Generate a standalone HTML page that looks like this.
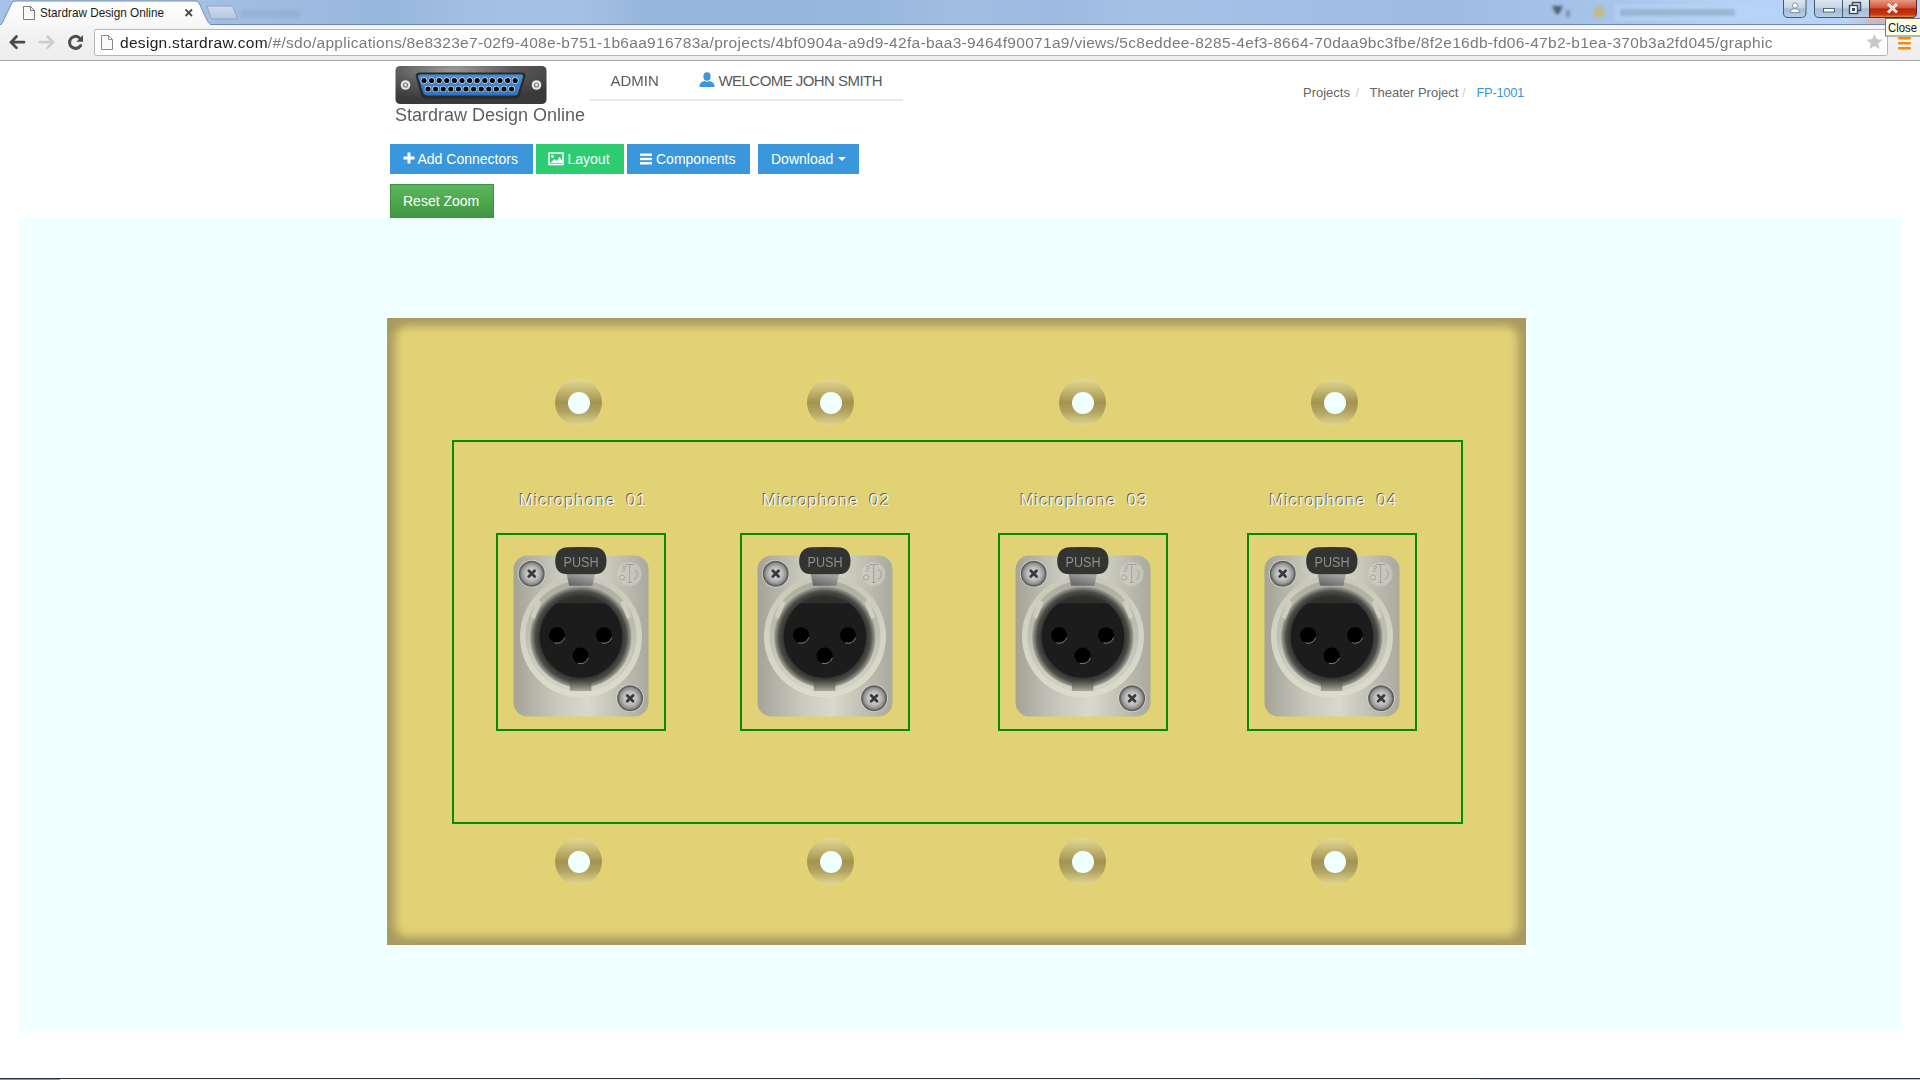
<!DOCTYPE html>
<html><head><meta charset="utf-8">
<style>
*{margin:0;padding:0;box-sizing:border-box}
html,body{width:1920px;height:1080px;overflow:hidden;background:#fff;font-family:"Liberation Sans",sans-serif;position:relative}
.abs{position:absolute}
#tabbar{left:0;top:0;width:1920px;height:25px;background:linear-gradient(90deg,#a6c2e4 0%,#9ab8de 20%,#96b4da 40%,#a2c0e4 60%,#9dbbe0 80%,#b0cdf0 100%)}
#tab{left:6px;top:1px;width:200px;height:24px;background:linear-gradient(#fff,#f6f6f6);border:1px solid #8aa0b8;border-bottom:none;border-radius:5px 5px 0 0;transform:perspective(0)}
#toolbar{left:0;top:25px;width:1920px;height:36px;background:linear-gradient(#fdfdfd,#f2f2f2);border-top:1px solid #7d93ac;border-bottom:1px solid #a8a8a8}
#omni{left:94px;top:29px;width:1760px;height:27px}
#omni .url{position:absolute;left:26px;top:5px;font-size:15.5px;color:#7a7a7a;white-space:nowrap;letter-spacing:0.3px}
#omni .url b{font-weight:normal;color:#222}
#page{left:0;top:61px;width:1920px;height:1019px;background:#fff}
.btn{position:absolute;height:30px;color:#fff;font-size:14px;line-height:30px;white-space:nowrap}
.blue{background:#3a97dc}
.btn .t{position:absolute;top:0}
.btn .ic{position:absolute;line-height:0}
.reset{background:linear-gradient(#5cb85c,#419641);border:1px solid #3e8f3e}
.nav{font-size:15px;color:#5a5a5a;white-space:nowrap}
.bc{font-size:13px;color:#666;white-space:nowrap}
.bc.sep{color:#ccc}
#logo{background:linear-gradient(90deg,#3d3d3d,#6a6a6a 30%,#8a8a8a 45%,#5a5a5a 70%,#3d3d3d);border-radius:5px}
.green{background:#2ecc71}
#canvas{left:19px;top:218px;width:1882px;height:814px;background:#f0ffff}
#plate{left:387px;top:318px;width:1139px;height:627px;background:#a99a5e;overflow:hidden}
#plate::after{content:"";position:absolute;left:8px;top:8px;right:8px;bottom:8px;border-radius:12px;background:#e2d276;filter:blur(5px)}
.hole{position:absolute;width:47px;height:47px;border-radius:50%;background:linear-gradient(#e4da94 0%,#bdb06a 30%,#a29450 50%,#b2a460 70%,#e2d890 100%)}
.hole::after{content:"";position:absolute;left:12.5px;top:12.5px;width:22px;height:22px;border-radius:50%;background:#f0ffff}
.gbox{position:absolute;border:2px solid #078a07}
.mic{position:absolute;font-size:17px;color:#f4f4ec;text-shadow:-1px -1px 0 #5e5e56;white-space:nowrap}
</style></head><body>
<div id="page" class="abs"></div><svg class="abs" style="left:0;top:0" width="1920" height="61" viewBox="0 0 1920 61">
<defs>
<linearGradient id="tabbarg" x1="0" y1="0" x2="1920" y2="0" gradientUnits="userSpaceOnUse">
<stop offset="0" stop-color="#a6c2e6"/><stop offset="0.1" stop-color="#a4c0e4"/><stop offset="0.2" stop-color="#98b7dc"/><stop offset="0.25" stop-color="#a2c0e4"/><stop offset="0.3" stop-color="#a4c2e6"/><stop offset="0.34" stop-color="#96b5da"/><stop offset="0.45" stop-color="#98b7dc"/><stop offset="0.5" stop-color="#a0bee2"/><stop offset="0.55" stop-color="#9dbbe0"/><stop offset="0.6" stop-color="#a4c2e6"/><stop offset="0.75" stop-color="#9ebce2"/><stop offset="0.85" stop-color="#a8c6ea"/><stop offset="0.9" stop-color="#b4d2f4"/><stop offset="1" stop-color="#b8d6f8"/>
</linearGradient>
<filter id="blur2" x="-20%" y="-50%" width="140%" height="200%"><feGaussianBlur stdDeviation="1.6"/></filter>
<linearGradient id="tabg" x1="0" y1="0" x2="0" y2="1"><stop offset="0" stop-color="#ffffff"/><stop offset="1" stop-color="#f7f7f7"/></linearGradient>
<linearGradient id="tbg" x1="0" y1="0" x2="0" y2="1"><stop offset="0" stop-color="#fbfbfb"/><stop offset="1" stop-color="#ececec"/></linearGradient>
<linearGradient id="closeg" x1="0" y1="0" x2="0" y2="1"><stop offset="0" stop-color="#e8a08c"/><stop offset="0.45" stop-color="#d45a3e"/><stop offset="0.55" stop-color="#b82410"/><stop offset="0.85" stop-color="#c83a10"/><stop offset="1" stop-color="#f0a040"/></linearGradient>
<linearGradient id="wbtng" x1="0" y1="0" x2="0" y2="1"><stop offset="0" stop-color="#dfe8f2"/><stop offset="0.45" stop-color="#c8d6e6"/><stop offset="0.55" stop-color="#a8bcd4"/><stop offset="1" stop-color="#b8cce4"/></linearGradient>
<linearGradient id="newtabg" x1="0" y1="0" x2="0" y2="1"><stop offset="0" stop-color="#d4e0ee"/><stop offset="1" stop-color="#b8c8dc"/></linearGradient>
<radialGradient id="glowr" cx="0.5" cy="0.5" r="0.5"><stop offset="0" stop-color="#ff8060" stop-opacity="0.7"/><stop offset="1" stop-color="#ff8060" stop-opacity="0"/></radialGradient>
</defs>
<rect x="0" y="0" width="1920" height="61" fill="url(#tbg)"/>
<rect x="0" y="0" width="1920" height="25" fill="url(#tabbarg)"/>
<clipPath id="tbclip"><rect x="0" y="0" width="1920" height="24"/></clipPath><ellipse cx="1880" cy="19" rx="34" ry="10" fill="url(#glowr)" clip-path="url(#tbclip)"/>
<line x1="0" y1="24.5" x2="1920" y2="24.5" stroke="#6a86aa" stroke-width="1"/>
<path d="M0 26 L0.5 25 L3 22 Q4 19 5.5 16 L12 3 Q13.5 1 16 1 L195 1 Q197.5 1 199 3 L205 16 Q206.5 19 208 22 L211 25 L212 26 Z" fill="url(#tabg)"/>
<path d="M0.5 25 L3 22 Q4 19 5.5 16 L12 3 Q13.5 1 16 1 L195 1 Q197.5 1 199 3 L205 16 Q206.5 19 208 22 L211 25" fill="none" stroke="#7890ac" stroke-width="1"/>
<path d="M207 6 L230 6 Q232.5 6 233.5 8 L237 17 Q238 19 235.5 19 L214 19 Q211.5 19 210.5 17 Z" fill="url(#newtabg)" stroke="#8ea4c0" stroke-width="1" opacity="0.9"/>
<path d="M23.5 6.5 L30.5 6.5 L34.5 10.5 L34.5 19.5 L23.5 19.5 Z" fill="#fafafa" stroke="#7a7a7a" stroke-width="1"/>
<path d="M30.5 6.5 L30.5 10.5 L34.5 10.5" fill="none" stroke="#7a7a7a" stroke-width="1"/>
<text x="40" y="17" font-family="Liberation Sans" font-size="13" textLength="124" lengthAdjust="spacingAndGlyphs" fill="#1a1a1a">Stardraw Design Online</text>
<path d="M185.5 9.5 L192 16 M192 9.5 L185.5 16" stroke="#4a4a4a" stroke-width="1.8"/>
<!-- nav buttons -->
<path d="M16.5 36.5 L11 42.2 L16.5 47.9 M11.5 42.2 L24 42.2" stroke="#4a4a4a" stroke-width="2.7" stroke-linecap="round" stroke-linejoin="miter" fill="none"/>
<path d="M47.5 36.5 L53 42.2 L47.5 47.9 M52.5 42.2 L40 42.2" stroke="#cdcdcd" stroke-width="2.7" stroke-linecap="round" stroke-linejoin="miter" fill="none"/>
<path d="M80.6 45.6 A6 6 0 1 1 79.2 37.6" stroke="#4e4e4e" stroke-width="3" fill="none" stroke-linecap="round"/>
<path d="M83 35 L83 41.8 L76.3 41.8 Z" fill="#4e4e4e"/>
<!-- omnibox -->
<rect x="94.5" y="29.5" width="1793" height="26" rx="2" fill="#fff" stroke="#b5b5b5" stroke-width="1"/>
<path d="M101.5 35.5 L108.5 35.5 L112.5 39.5 L112.5 49.5 L101.5 49.5 Z" fill="#fafafa" stroke="#8a8a8a" stroke-width="1"/>
<path d="M108.5 35.5 L108.5 39.5 L112.5 39.5" fill="none" stroke="#8a8a8a" stroke-width="1"/>
<path d="M1874.5 34 L1876.8 39.3 L1882.5 39.7 L1878.2 43.4 L1879.6 49 L1874.5 46 L1869.4 49 L1870.8 43.4 L1866.5 39.7 L1872.2 39.3 Z" fill="#c8c8c8"/>
<rect x="1898" y="37" width="13" height="2.4" rx="1" fill="#f08c10"/>
<rect x="1898" y="42" width="13" height="2.4" rx="1" fill="#f08c10"/>
<rect x="1898" y="47" width="13" height="2.4" rx="1" fill="#f08c10"/>
<line x1="0" y1="60.5" x2="1920" y2="60.5" stroke="#a6a6a6" stroke-width="1"/>
<!-- blurry taskbar items -->
<g filter="url(#blur2)"><circle cx="1599" cy="12" r="6" fill="#c0bc80" opacity="0.9"/>
<path d="M1552 6 L1563 6 L1559 14 L1556 14 Z" fill="#3a4454" opacity="0.8"/>
<rect x="1566" y="10" width="4" height="7" fill="#506078" opacity="0.5"/>
<rect x="1615" y="4" width="320" height="17" fill="#b8d6f8" opacity="0.6"/>
<rect x="1620" y="9" width="115" height="7" fill="#90a8c8" opacity="0.7"/>
<rect x="240" y="10" width="60" height="8" fill="#90a8c8" opacity="0.5"/></g>
<!-- window buttons -->
<path d="M1783.5 -1 L1783.5 13 Q1783.5 17.5 1788 17.5 L1801.5 17.5 Q1806 17.5 1806 13 L1806 -1" fill="url(#wbtng)" stroke="#4a5a6e" stroke-width="1"/>
<circle cx="1795" cy="5.5" r="2.6" fill="#fff" stroke="#4a5a6e" stroke-width="0.6"/>
<path d="M1790.5 12.5 Q1790.5 8.8 1795 8.8 Q1799.5 8.8 1799.5 12.5 Z" fill="#fff" stroke="#4a5a6e" stroke-width="0.6"/>
<path d="M1814.5 -1 L1814.5 13 Q1814.5 17.5 1819 17.5 L1869.5 17.5 L1869.5 -1" fill="url(#wbtng)" stroke="#4a5a6e" stroke-width="1"/>
<line x1="1842.5" y1="0" x2="1842.5" y2="17" stroke="#4a5a6e" stroke-width="1"/>
<rect x="1823.5" y="8.5" width="11" height="3.5" fill="#fff" stroke="#3a4a5a" stroke-width="0.8"/>
<rect x="1852.5" y="2.5" width="8" height="8" fill="none" stroke="#3a4a5a" stroke-width="1.4"/>
<rect x="1849.5" y="5.5" width="8" height="8" fill="#fff" stroke="#3a4a5a" stroke-width="1.4"/>
<rect x="1852" y="8" width="3" height="3" fill="#3a4a5a"/>
<path d="M1869.5 -1 L1869.5 17.5 L1912 17.5 Q1916.5 17.5 1916.5 13 L1916.5 -1" fill="url(#closeg)" stroke="#5a2a20" stroke-width="1"/>
<path d="M1888 4 L1897 12.5 M1897 4 L1888 12.5" stroke="#fff" stroke-width="2.8"/>
<path d="M1888 4 L1897 12.5 M1897 4 L1888 12.5" stroke="#5a3a30" stroke-width="0.6" opacity="0.5"/>
<!-- tooltip -->
<rect x="1885.5" y="18.5" width="36" height="17.5" fill="#ffffe1" stroke="#767676" stroke-width="1"/>
<text x="1888" y="32" font-family="Liberation Sans" font-size="13" textLength="29" lengthAdjust="spacingAndGlyphs" fill="#101030">Close</text>
</svg>
<div id="omni" class="abs"><div class="url"><b>design.stardraw.com</b>/#/sdo/applications/8e8323e7-02f9-408e-b751-1b6aa916783a/projects/4bf0904a-a9d9-42fa-baa3-9464f90071a9/views/5c8eddee-8285-4ef3-8664-70daa9bc3fbe/8f2e16db-fd06-47b2-b1ea-370b3a2fd045/graphic</div></div>


<div id="canvas" class="abs"></div>
<div id="plate" class="abs"></div>

<div class="btn blue" style="left:390px;top:144px;width:143px;"><span class="ic" style="left:12.5px;top:7px"><svg width="12" height="14" viewBox="0 0 12 14"><path d="M4.5 1.5h3v4h4v3h-4v4h-3v-4h-4v-3h4z" fill="#fff"/></svg></span><span class="t" style="left:27.5px">Add Connectors</span></div>
<div class="btn green" style="left:536px;top:144px;width:88px;"><span class="ic" style="left:12px;top:8px"><svg width="16" height="14" viewBox="0 0 16 14"><rect x="1" y="1" width="14" height="11.5" fill="none" stroke="#fff" stroke-width="1.6"/><circle cx="4.5" cy="4.5" r="1.4" fill="#fff"/><path d="M2.5 11l4-4 2 2 3-4 2.5 3.5v2.5z" fill="#fff"/></svg></span><span class="t" style="left:31.5px">Layout</span></div>
<div class="btn blue" style="left:627px;top:144px;width:123px;"><span class="ic" style="left:12px;top:8px"><svg width="14" height="14" viewBox="0 0 14 14"><rect x="1" y="1.5" width="12" height="2.4" fill="#fff"/><rect x="1" y="5.8" width="12" height="2.4" fill="#fff"/><rect x="1" y="10.1" width="12" height="2.4" fill="#fff"/></svg></span><span class="t" style="left:29px">Components</span></div>
<div class="btn blue" style="left:758px;top:144px;width:101px;"><span class="t" style="left:13px">Download</span><span class="ic" style="left:80px;top:13px"><svg width="9" height="5" viewBox="0 0 9 5"><path d="M0 0h8L4 4z" fill="#fff"/></svg></span></div>
<div class="btn reset" style="left:390px;top:184px;width:104px;height:34px;line-height:32px"><span class="t" style="left:12px">Reset Zoom</span></div>

<svg class="abs" style="left:0;top:0" width="600" height="130" viewBox="0 0 600 130">
<defs>
<radialGradient id="lgbg" cx="0.38" cy="0.1" r="0.8"><stop offset="0" stop-color="#9a9a9a"/><stop offset="0.5" stop-color="#5a5a5a"/><stop offset="1" stop-color="#3a3a3a"/></radialGradient>
<linearGradient id="lgblue" x1="0" y1="0" x2="0" y2="1"><stop offset="0" stop-color="#4a8fd8"/><stop offset="1" stop-color="#2f72c0"/></linearGradient>
<radialGradient id="nut"><stop offset="0" stop-color="#fff"/><stop offset="0.5" stop-color="#888"/><stop offset="1" stop-color="#ddd"/></radialGradient>
</defs>
<rect x="395.5" y="66" width="151" height="38" rx="4.5" fill="url(#lgbg)"/>
<path d="M415.5 75.5 Q416 72.5 420 72.5 L522 72.5 Q526 72.5 525.5 76 L520 95 Q519 98.5 515 98.5 L426 98.5 Q422 98.5 421 95 Z" fill="#2a2a2a"/>
<path d="M418 76.5 Q418.5 74.5 421 74.5 L521 74.5 Q523.5 74.5 523 77 L518 93.5 Q517.3 95.5 514.5 95.5 L427 95.5 Q424.5 95.5 423.5 93.5 Z" fill="url(#lgblue)"/>
<g fill="#cfe2f6"><circle cx="424.0" cy="80.5" r="3.3"/><circle cx="431.6" cy="80.5" r="3.3"/><circle cx="439.2" cy="80.5" r="3.3"/><circle cx="446.8" cy="80.5" r="3.3"/><circle cx="454.4" cy="80.5" r="3.3"/><circle cx="462.0" cy="80.5" r="3.3"/><circle cx="469.6" cy="80.5" r="3.3"/><circle cx="477.2" cy="80.5" r="3.3"/><circle cx="484.8" cy="80.5" r="3.3"/><circle cx="492.4" cy="80.5" r="3.3"/><circle cx="500.0" cy="80.5" r="3.3"/><circle cx="507.6" cy="80.5" r="3.3"/><circle cx="515.2" cy="80.5" r="3.3"/><circle cx="428.0" cy="89" r="3.3"/><circle cx="435.6" cy="89" r="3.3"/><circle cx="443.2" cy="89" r="3.3"/><circle cx="450.8" cy="89" r="3.3"/><circle cx="458.4" cy="89" r="3.3"/><circle cx="466.0" cy="89" r="3.3"/><circle cx="473.6" cy="89" r="3.3"/><circle cx="481.2" cy="89" r="3.3"/><circle cx="488.8" cy="89" r="3.3"/><circle cx="496.4" cy="89" r="3.3"/><circle cx="504.0" cy="89" r="3.3"/><circle cx="511.6" cy="89" r="3.3"/></g>
<g fill="#0a0a0a"><circle cx="424.0" cy="80.5" r="2.6"/><circle cx="431.6" cy="80.5" r="2.6"/><circle cx="439.2" cy="80.5" r="2.6"/><circle cx="446.8" cy="80.5" r="2.6"/><circle cx="454.4" cy="80.5" r="2.6"/><circle cx="462.0" cy="80.5" r="2.6"/><circle cx="469.6" cy="80.5" r="2.6"/><circle cx="477.2" cy="80.5" r="2.6"/><circle cx="484.8" cy="80.5" r="2.6"/><circle cx="492.4" cy="80.5" r="2.6"/><circle cx="500.0" cy="80.5" r="2.6"/><circle cx="507.6" cy="80.5" r="2.6"/><circle cx="515.2" cy="80.5" r="2.6"/><circle cx="428.0" cy="89" r="2.6"/><circle cx="435.6" cy="89" r="2.6"/><circle cx="443.2" cy="89" r="2.6"/><circle cx="450.8" cy="89" r="2.6"/><circle cx="458.4" cy="89" r="2.6"/><circle cx="466.0" cy="89" r="2.6"/><circle cx="473.6" cy="89" r="2.6"/><circle cx="481.2" cy="89" r="2.6"/><circle cx="488.8" cy="89" r="2.6"/><circle cx="496.4" cy="89" r="2.6"/><circle cx="504.0" cy="89" r="2.6"/><circle cx="511.6" cy="89" r="2.6"/></g>
<circle cx="405.5" cy="85" r="4.8" fill="#e6e6e6"/><circle cx="405.5" cy="85" r="2.6" fill="#7a7a7a"/><circle cx="405.5" cy="85" r="1.4" fill="#eee"/>
<circle cx="536.5" cy="85" r="4.8" fill="#e6e6e6"/><circle cx="536.5" cy="85" r="2.6" fill="#7a7a7a"/><circle cx="536.5" cy="85" r="1.4" fill="#eee"/>
</svg>
<div class="abs" style="left:395px;top:105px;font-size:18px;color:#5e5e5e;white-space:nowrap">Stardraw Design Online</div>
<div class="abs nav" style="left:610.5px;top:72px">ADMIN</div>
<svg class="abs" style="left:699px;top:72px" width="16" height="15" viewBox="0 0 16 15"><ellipse cx="8" cy="4.5" rx="3.6" ry="4.3" fill="#3a97dc"/><path d="M0.5 15c0-3.5 1.5-5 5-6 1.5 1 3.5 1 5 0 3.5 1 5 2.5 5 6z" fill="#3a97dc"/></svg><div class="abs nav" style="left:718.5px;top:72px;letter-spacing:-0.55px">WELCOME JOHN SMITH</div>
<div class="abs" style="left:590px;top:99px;width:313px;height:2px;background:#e8e8e8"></div>
<div class="abs bc" style="left:1303px;top:85px">Projects</div><div class="abs bc sep" style="left:1355.5px;top:85px">/</div><div class="abs bc" style="left:1369.5px;top:85px">Theater Project</div><div class="abs bc sep" style="left:1462px;top:85px">/</div><div class="abs bc" style="left:1476.5px;top:85px;color:#3a97dc;letter-spacing:-0.35px">FP-1001</div>

<div class="mic" style="left:519.4px;top:491px;letter-spacing:0.77px">Microphone</div><div class="mic" style="left:626.4px;top:491px;letter-spacing:1.2px">01</div>
<div class="mic" style="left:762.5px;top:491px;letter-spacing:0.77px">Microphone</div><div class="mic" style="left:869.5px;top:491px;letter-spacing:1.2px">02</div>
<div class="mic" style="left:1020.2px;top:491px;letter-spacing:0.77px">Microphone</div><div class="mic" style="left:1127.2px;top:491px;letter-spacing:1.2px">03</div>
<div class="mic" style="left:1269.8px;top:491px;letter-spacing:0.77px">Microphone</div><div class="mic" style="left:1376.8px;top:491px;letter-spacing:1.2px">04</div>

<div class="hole" style="left:555px;top:379px"></div>
<div class="hole" style="left:807px;top:379px"></div>
<div class="hole" style="left:1059px;top:379px"></div>
<div class="hole" style="left:1311px;top:379px"></div>
<div class="hole" style="left:555px;top:838px"></div>
<div class="hole" style="left:807px;top:838px"></div>
<div class="hole" style="left:1059px;top:838px"></div>
<div class="hole" style="left:1311px;top:838px"></div>

<svg class="abs" style="left:0;top:0" width="1920" height="1080" viewBox="0 0 1920 1080">
<defs>
<linearGradient id="bodyg" x1="0" y1="0" x2="1" y2="0">
<stop offset="0" stop-color="#a3a397"/><stop offset="0.35" stop-color="#cbcbbf"/><stop offset="0.55" stop-color="#d8d8cb"/><stop offset="1" stop-color="#a9a99d"/>
</linearGradient>
<linearGradient id="ringg" x1="0" y1="0" x2="0" y2="1">
<stop offset="0" stop-color="#acaca0"/><stop offset="0.5" stop-color="#c0c0b2"/><stop offset="1" stop-color="#d4d4c6"/>
</linearGradient>
<linearGradient id="ring0g" x1="0" y1="0" x2="0" y2="1">
<stop offset="0" stop-color="#c8c8ba"/><stop offset="0.5" stop-color="#d4d4c6"/><stop offset="1" stop-color="#dcdccc"/>
</linearGradient>
<linearGradient id="notchg" x1="0" y1="0" x2="0" y2="1">
<stop offset="0" stop-color="#3a3a38"/><stop offset="1" stop-color="#a8a89c"/>
</linearGradient>
<radialGradient id="sockg" cx="0.5" cy="0.5" r="0.5">
<stop offset="0.6" stop-color="#2a2a28"/><stop offset="0.8" stop-color="#30302e"/><stop offset="0.9" stop-color="#4c4c48"/><stop offset="1" stop-color="#a4a49a"/>
</radialGradient>
<radialGradient id="screwg" cx="0.5" cy="0.5" r="0.5">
<stop offset="0" stop-color="#d8d8d8"/><stop offset="0.55" stop-color="#bdbdbd"/><stop offset="0.85" stop-color="#959595"/><stop offset="1" stop-color="#6a6a6a"/>
</radialGradient>
<linearGradient id="stemg" x1="0" y1="1" x2="0.6" y2="0">
<stop offset="0" stop-color="#5e5e5e"/><stop offset="1" stop-color="#a2a2a2"/>
</linearGradient>
<symbol id="xlr" viewBox="0 0 170 198" width="170" height="198">
<rect x="17.5" y="22.5" width="135" height="161" rx="14" fill="url(#bodyg)"/>
<circle cx="85" cy="103.3" r="61" fill="url(#ring0g)"/>
<circle cx="85" cy="103.3" r="55.5" fill="url(#ringg)"/>
<circle cx="84.8" cy="104" r="50.7" fill="url(#sockg)"/>
<path d="M34.6 83.5 L41.3 66.7 L45.5 69.5 L38.5 86.5 Z" fill="#d2d2c4" opacity="0.85"/>
<path d="M135.4 83.5 L128.7 66.7 L124.5 69.5 L131.5 86.5 Z" fill="#d2d2c4" opacity="0.85"/>
<rect x="73.8" y="146.5" width="21.6" height="11.5" fill="url(#notchg)"/>
<clipPath id="insclip"><rect x="0" y="70.3" width="170" height="100"/></clipPath>
<circle cx="85" cy="103.5" r="41.3" fill="#1c1c1c" clip-path="url(#insclip)"/>
<g fill="#000">
<circle cx="61.1" cy="102.2" r="8"/><circle cx="108" cy="102.2" r="8"/><circle cx="84.6" cy="122.6" r="8"/>
</g>
<g fill="none" stroke="#b8b8b8" stroke-width="0.9" opacity="0.75">
<path d="M58.5 109.8 A8 8 0 0 0 68.8 104.5"/><path d="M105.4 109.8 A8 8 0 0 0 115.7 104.5"/><path d="M82 130.2 A8 8 0 0 0 92.3 124.9"/>
</g>
<path d="M70.7 41.3 L98.8 41.3 L96.4 52.8 L73.1 52.8 Z" fill="url(#stemg)"/>
<path d="M59.2 28 Q59.2 15 72 14.3 Q85 13.6 98 14.3 Q110.5 15 110.5 28 Q110.5 41.3 98 41.3 L72 41.3 Q59.2 41.3 59.2 28 Z" fill="#333331"/>
<text x="85" y="34.1" text-anchor="middle" font-family="Liberation Sans" font-size="14.5" textLength="35" lengthAdjust="spacingAndGlyphs" fill="#8e8e8c">PUSH</text>
<circle cx="35.7" cy="40.7" r="13.8" fill="#d6d6ca"/><circle cx="35.7" cy="40.7" r="13" fill="#606060"/>
<circle cx="35.7" cy="40.7" r="11.8" fill="url(#screwg)"/>
<path d="M32.8 37.8 L38.6 43.6 M38.6 37.8 L32.8 43.6" stroke="#3a3a3a" stroke-width="2.8" stroke-linecap="round"/>
<circle cx="134.1" cy="165.3" r="13.8" fill="#d6d6ca"/><circle cx="134.1" cy="165.3" r="13" fill="#606060"/>
<circle cx="134.1" cy="165.3" r="11.8" fill="url(#screwg)"/>
<path d="M131.2 162.4 L137 168.2 M137 162.4 L131.2 168.2" stroke="#3a3a3a" stroke-width="2.8" stroke-linecap="round"/>
<circle cx="133.6" cy="41" r="12" fill="#dedcd0" opacity="0.45"/>
<g fill="none" stroke="#7a7a74" stroke-width="0.8" opacity="0.6"><path d="M129 31.5 L138.5 31.5 M133.7 31.5 L133.7 50 M131.7 49.5 L135.7 49.5 M129 38 L125 38 M138.5 36.5 Q142 38 141 43 Q140 47 137.5 46"/><circle cx="126" cy="44.5" r="2.6"/><circle cx="128" cy="34.5" r="1.5"/></g>
</symbol>
</defs>
<use href="#xlr" x="496" y="533"/>
<use href="#xlr" x="740" y="533"/>
<use href="#xlr" x="998" y="533"/>
<use href="#xlr" x="1247" y="533"/>
</svg>
<div class="gbox" style="left:452px;top:440px;width:1011px;height:384px"></div>
<div class="gbox" style="left:496px;top:533px;width:170px;height:198px"></div>
<div class="gbox" style="left:740px;top:533px;width:170px;height:198px"></div>
<div class="gbox" style="left:998px;top:533px;width:170px;height:198px"></div>
<div class="gbox" style="left:1247px;top:533px;width:170px;height:198px"></div>
<div class="abs" style="left:0;top:1078px;width:1920px;height:1px;background:#2c343c"></div>
<div class="abs" style="left:0;top:1079px;width:1920px;height:1px;background:linear-gradient(90deg,#8a98a8 0,#8a98a8 60px,#f4f4f4 60px,#f4f4f4 1480px,#b8c8d8 1480px,#b8c8d8 1920px)"></div>
</body></html>
